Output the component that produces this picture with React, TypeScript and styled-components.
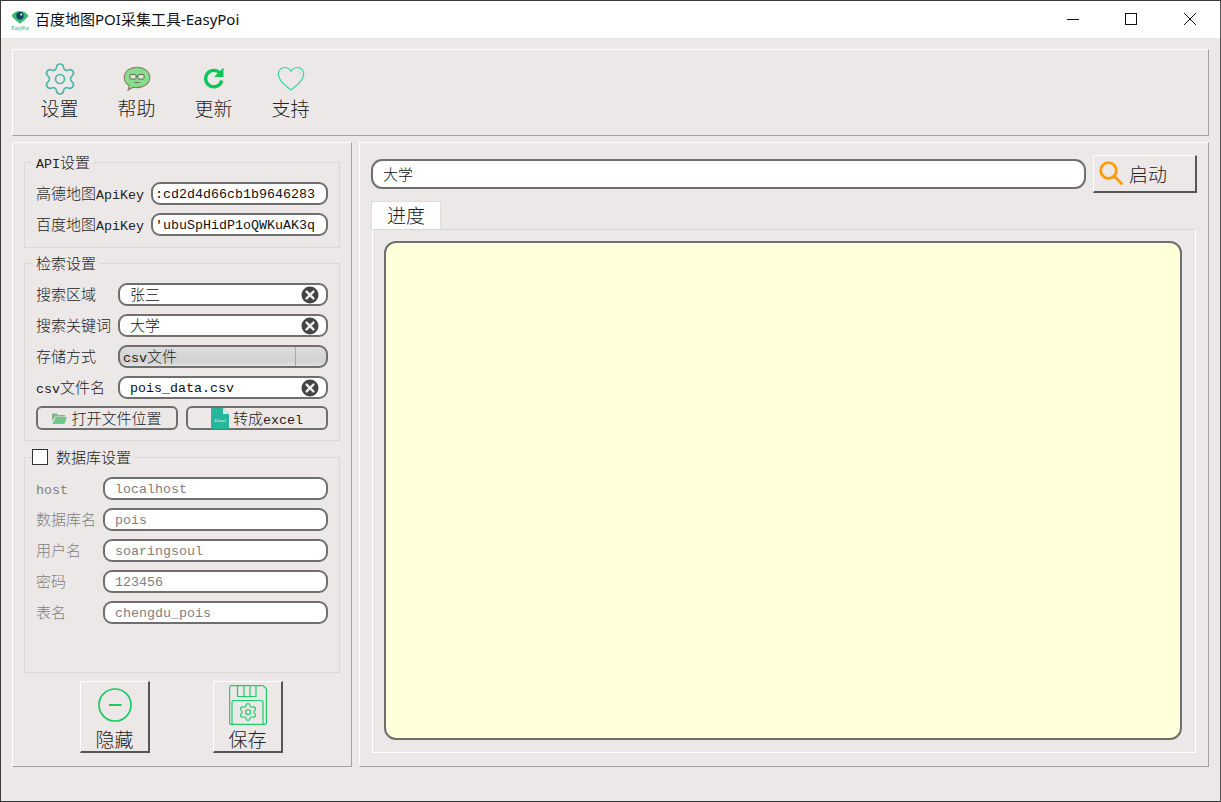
import React from 'react';
import styled, { createGlobalStyle } from 'styled-components';
import { Settings } from 'lucide-react';

const CJK = '"Noto Sans CJK SC", "Noto Sans", sans-serif';
const MONO = '"Liberation Mono", "Noto Sans CJK SC", monospace';
const PANEL = '#ece8e7';

const GlobalStyle = createGlobalStyle`
  html, body {
    margin: 0;
    padding: 0;
    background: ${PANEL};
  }
  * {
    box-sizing: border-box;
  }
`;

// latin runs are set smaller, the original font has half width latin glyphs
const LatinRun = styled.span`
  font-family: ${MONO};
  font-size: 0.889em;
`;

const Txt = ({ children }: { children: string }) => (
  <>
    {children.split(/([\x00-\x7f]+)/).map((part, i) =>
      i % 2 ? <LatinRun key={i}>{part}</LatinRun> : part,
    )}
  </>
);

const Window = styled.div`
  width: 1221px;
  height: 802px;
  display: flex;
  flex-direction: column;
  background: ${PANEL};
  border: 1px solid #3a3a3a;
  border-right-color: #555;
  font-family: ${CJK};
  font-weight: 300;
  overflow: hidden;
`;

const TitleBar = styled.div`
  height: 37px;
  flex: none;
  display: flex;
  align-items: center;
  background: #fff;
  padding-left: 9px;
`;

const TitleText = styled.span`
  margin-left: 5px;
  padding-bottom: 2px;
  font-family: "Noto Sans", "Noto Sans CJK SC", sans-serif;
  font-weight: 400;
  font-size: 15px;
  color: #111;
  flex: 1;
`;

const WinControls = styled.div`
  display: flex;
  height: 100%;
  margin-right: 1px;
`;

const WinButton = styled.div`
  width: 58.5px;
  display: flex;
  align-items: center;
  justify-content: center;
  padding-bottom: 1px;
`;

const Content = styled.div`
  flex: 1;
  display: flex;
  flex-direction: column;
  padding: 11px 11px 34px;
  min-height: 0;
`;

const Frame = styled.div`
  border: 1px solid #a3a09e;
  border-top-color: #fff;
  border-left-color: #fff;
`;

const Toolbar = styled(Frame)`
  height: 87px;
  flex: none;
  display: flex;
  padding: 11px 0 0 8px;
`;

const ToolButton = styled.div`
  width: 77px;
  height: 62px;
  display: flex;
  flex-direction: column;
  align-items: center;
  font-size: 19px;
  line-height: 22px;
  color: #222;
`;

const ToolIcon = styled.div`
  width: 36px;
  height: 36px;
  flex: none;
  display: flex;
  align-items: center;
  justify-content: center;
`;

const Main = styled.div`
  flex: 1;
  display: flex;
  gap: 7px;
  margin-top: 6px;
  min-height: 0;
`;

const LeftPanel = styled(Frame)`
  width: 340px;
  flex: none;
  display: flex;
  flex-direction: column;
  padding: 19px 11px 12px;
`;

const GroupBox = styled.div<{ $height?: number; $gap: number; $padBottom: number }>`
  position: relative;
  flex: none;
  height: ${({ $height }) => ($height ? `${$height}px` : 'auto')};
  display: flex;
  flex-direction: column;
  gap: 8px;
  padding: 19px 11px ${({ $padBottom }) => $padBottom}px;
  margin-bottom: ${({ $gap }) => $gap}px;
  border: 1px solid #dbd9d7;
`;

const GroupTitle = styled.div<{ $check?: boolean }>`
  position: absolute;
  top: -12px;
  left: 7px;
  display: flex;
  align-items: center;
  gap: 8px;
  padding: 0 4px 0 ${({ $check }) => ($check ? 0 : 4)}px;
  height: 20px;
  font-size: 15px;
  color: #222;
  background: ${PANEL};
`;

const CheckBox = styled.span`
  width: 16px;
  height: 16px;
  margin-top: 2px;
  background: #fff;
  border: 1px solid #333;
`;

const FieldRow = styled.div`
  display: flex;
  height: 23px;
  align-items: center;
`;

const Label = styled.div<{ $width: number; $off?: boolean }>`
  width: ${({ $width }) => $width}px;
  flex: none;
  padding-bottom: 2px;
  font-size: 15px;
  white-space: nowrap;
  color: ${({ $off }) => ($off ? '#808080' : '#222')};
`;

const Input = styled.div<{ $padLeft: number; $padRight: number }>`
  flex: 1;
  min-width: 0;
  height: 100%;
  display: flex;
  align-items: center;
  background: #fff;
  border: 2px solid #6f6f6f;
  border-radius: 9px;
  padding: 0 ${({ $padRight }) => $padRight}px 0 ${({ $padLeft }) => $padLeft}px;
`;

const InputText = styled.div<{ $off?: boolean }>`
  flex: 1;
  min-width: 0;
  white-space: nowrap;
  padding-bottom: 2px;
  font-size: 15px;
  line-height: 19px;
  color: ${({ $off }) => ($off ? '#808080' : '#111')};
`;

const Combo = styled.div`
  flex: 1;
  height: 100%;
  display: flex;
  align-items: center;
  border: 2px solid #6f6f6f;
  border-radius: 9px;
  background: linear-gradient(#dcdcdc, #d2d2d2 75%, #e2e2e2);
  font-size: 15px;
  color: #222;
  overflow: hidden;
`;

const ComboText = styled.div`
  flex: 1;
  padding: 0 0 2px 3px;
`;

const ComboArrow = styled.div`
  width: 31px;
  height: 100%;
  border-left: 1px solid #a8a8a8;
`;

const ActionRow = styled.div`
  display: flex;
  gap: 8px;
  height: 24px;
  margin-top: -1px;
`;

const ActionButton = styled.div`
  flex: 1;
  display: flex;
  align-items: center;
  justify-content: center;
  gap: 4px;
  border: 2px solid #6f6f6f;
  border-radius: 6px;
  font-size: 15px;
  color: #222;
  white-space: nowrap;
`;

const ActionLabel = styled.span`
  padding-bottom: 2px;
`;

const BottomButtons = styled.div`
  display: flex;
  gap: 63px;
  padding-left: 56px;
`;

const RaisedButton = styled.div`
  display: flex;
  align-items: center;
  border: 1px solid #fff;
  border-right: 2px solid #555;
  border-bottom: 2px solid #555;
  background: ${PANEL};
  font-size: 19px;
  color: #222;
`;

const BigButton = styled(RaisedButton)`
  width: 70px;
  height: 72px;
  flex-direction: column;
  line-height: 24px;
  padding-top: 1px;
`;

const BigIcon = styled.div`
  height: 44px;
  flex: none;
  display: flex;
  align-items: center;
  justify-content: center;
`;

const RightPanel = styled(Frame)`
  flex: 1;
  display: flex;
  flex-direction: column;
  padding: 12px 11px 13px 11px;
`;

const SearchRow = styled.div`
  display: flex;
  align-items: center;
  height: 38px;
  flex: none;
  gap: 7px;
`;

const SearchInput = styled.div`
  flex: 1;
  height: 30px;
  display: flex;
  align-items: center;
  padding: 0 0 2px 10px;
  background: #fff;
  border: 2px solid #6f6f6f;
  border-radius: 11px;
  font-size: 15px;
  color: #111;
`;

const StartButton = styled(RaisedButton)`
  width: 104px;
  height: 38px;
  gap: 6px;
  padding: 0 0 1px 5px;
  flex: none;
`;

const TabHead = styled.div`
  width: 70px;
  height: 29px;
  flex: none;
  margin-top: 8px;
  padding-bottom: 3px;
  display: flex;
  align-items: center;
  justify-content: center;
  background: #fff;
  border: 1px solid #dcdcdc;
  border-bottom: none;
  font-size: 19px;
  color: #222;
`;

const TabPane = styled.div`
  flex: 1;
  min-height: 0;
  margin: -1px 1px 0 1px;
  padding: 11px 12px 12px 11px;
  border: 1px solid #fff;
  border-top-color: #d6d6d6;
`;

const LogBox = styled.div`
  height: 100%;
  margin: 0 1px 1px 0;
  background: #ffffd9;
  border: 2px solid #6f6f6f;
  border-radius: 12px;
`;

const ClearIcon = () => (
  <svg width="18" height="18" viewBox="0 0 18 18" style={{ flex: 'none' }}>
    <circle cx="9" cy="9" r="8.5" fill="#444" />
    <path d="M5.6 5.6l6.8 6.8M12.4 5.6l-6.8 6.8" stroke="#eee" strokeWidth="2.4" strokeLinecap="round" />
  </svg>
);

const Logo = () => (
  <svg width="20" height="22" viewBox="0 0 20 22" style={{ marginTop: 1 }}>
    <path d="M10 2C6.200 2 3.600 4 1.500 6.800 3 9 5 10.500 7 12.200L10 14.800l3-2.600c2-1.700 4-3.200 5.500-5.400C16.400 4 13.800 2 10 2z" fill="#39bb73" />
    <circle cx="10" cy="6.800" r="3.700" fill="#123f66" />
    <circle cx="11.200" cy="5.600" r="1.100" fill="#dfe" />
    <text x="10" y="20.500" textAnchor="middle" fontSize="5.400" fontFamily="Liberation Serif, serif" fill="#2fa866">EasyPoi</text>
  </svg>
);

const GlassesBubble = () => (
  <svg width="28" height="26" viewBox="0 0 28 26">
    <path d="M14 1.200C6.800 1.200 1.200 5.600 1.200 11.400c0 3.400 1.900 6.200 4.900 8.100l-1 4.600 5.200-2.900c1.200.3 2.400.4 3.700.4 7.200 0 12.800-4.500 12.800-10.200S21.200 1.200 14 1.200z" fill="#86dd8b" stroke="#8f7a6c" strokeWidth="1.100" />
    <rect x="7" y="8.500" width="6" height="4.600" rx=".8" fill="#d5efd5" stroke="#6d665e" strokeWidth="1" />
    <rect x="15" y="8.500" width="6" height="4.600" rx=".8" fill="#d5efd5" stroke="#6d665e" strokeWidth="1" />
    <path d="M13 10h2M11.500 16.500h5" stroke="#6d665e" strokeWidth="1" />
  </svg>
);

const RefreshIcon = () => (
  <svg width="24" height="24" viewBox="0 0 24 24" fill="none" style={{ marginBottom: 2 }}>
    <path d="M18.200 7.400A8.200 8.200 0 1 0 19.800 14.500" stroke="#0bc75a" strokeWidth="3.400" />
    <path d="M21.500 1.500V11H12z" fill="#0bc75a" />
  </svg>
);

const HeartIcon = () => (
  <svg width="28" height="26" viewBox="0 0 28 26" fill="none">
    <path d="M14 24C10 20.500 1.200 15 1.200 8.200 1.200 4.200 4.200 1.500 7.700 1.500c2.700 0 4.900 1.400 6.300 3.700 1.400-2.300 3.600-3.700 6.300-3.700 3.500 0 6.500 2.700 6.500 6.700C26.800 15 18 20.500 14 24z" stroke="#3dd39b" strokeWidth="1.200" />
    <path d="M20.500 5c1.800.4 3 1.800 3.100 3.600M23.600 10.200v.8" stroke="#a8e8cf" strokeWidth="1.100" />
  </svg>
);

const MinusCircle = () => (
  <svg width="34" height="34" viewBox="0 0 34 34" fill="none">
    <circle cx="17" cy="17" r="16" stroke="#18cc62" strokeWidth="1.700" />
    <path d="M11 17h12.500" stroke="#18cc62" strokeWidth="2" />
  </svg>
);

const SaveIcon = () => (
  <svg width="38" height="40" viewBox="0 0 38 40" fill="none" stroke="#1fcf68" strokeWidth="1.200">
    <path d="M2.500.6H34l3.400 3.200V37.500c0 1-.8 1.900-1.900 1.900H2.500c-1 0-1.900-.9-1.900-1.900V2.500c0-1 .9-1.900 1.900-1.900z" />
    <path d="M8.500.6V11.500h18.500V.6M15 .6V11.500M21 .6V11.500" />
    <path d="M3 39V17c0-1 .6-1.500 1.500-1.500h28c1 0 1.500.6 1.500 1.500v22" />
    <Settings x={9} y={17} width={20} height={20} color="#1fcf68" strokeWidth={1.400} />
  </svg>
);

const FolderIcon = () => (
  <svg width="15" height="12" viewBox="0 0 15 12">
    <path d="M0 1.500h5l1.200 1.500H13v1.500H3.500L0 9z" fill="#7fb98a" />
    <path d="M3.800 5H15l-2.500 7H0.300z" fill="#74c78a" />
  </svg>
);

const ExcelDoc = () => (
  <svg width="18" height="21" viewBox="0 0 18 21">
    <path d="M0 0h12l6 6v15H0z" fill="#27b59b" />
    <path d="M12 0l6 6h-6z" fill="#d6f1ea" />
    <text x="9" y="13.500" textAnchor="middle" fontSize="5" fontStyle="italic" fontFamily="Liberation Serif, serif" fill="#e8fff8">Excel</text>
  </svg>
);

const SearchIcon = () => (
  <svg width="24" height="24" viewBox="0 0 24 24" fill="none" stroke="#ff9a0a" strokeWidth="2.800">
    <circle cx="9.500" cy="9.500" r="7.800" />
    <path d="M15 15l7.500 7.500" strokeLinecap="round" />
  </svg>
);

interface FieldProps {
  label: string;
  labelWidth: number;
  value: string;
  padLeft?: number;
  padRight?: number;
  clear?: boolean;
  off?: boolean;
}

const Field = ({ label, labelWidth, value, padLeft = 10, padRight = 7, clear, off }: FieldProps) => (
  <FieldRow>
    <Label $width={labelWidth} $off={off}>
      <Txt>{label}</Txt>
    </Label>
    <Input $padLeft={padLeft} $padRight={padRight}>
      <InputText $off={off}>
        <Txt>{value}</Txt>
      </InputText>
      {clear && <ClearIcon />}
    </Input>
  </FieldRow>
);

const App = () => {
  return (
    <Window>
      <GlobalStyle />
      <TitleBar>
        <Logo />
        <TitleText>百度地图POI采集工具-EasyPoi</TitleText>
        <WinControls>
          <WinButton>
            <svg width="12" height="12" viewBox="0 0 12 12">
              <path d="M0 6.500h12" stroke="#111" />
            </svg>
          </WinButton>
          <WinButton>
            <svg width="12" height="12" viewBox="0 0 12 12" fill="none">
              <rect x=".5" y=".5" width="11" height="11" stroke="#111" />
            </svg>
          </WinButton>
          <WinButton>
            <svg width="12" height="12" viewBox="0 0 12 12">
              <path d="M0 0l12 12M12 0L0 12" stroke="#111" />
            </svg>
          </WinButton>
        </WinControls>
      </TitleBar>

      <Content>
        <Toolbar>
          <ToolButton>
            <ToolIcon>
              <Settings size={36} color="#4db6ac" strokeWidth={1.1} />
            </ToolIcon>
            设置
          </ToolButton>
          <ToolButton>
            <ToolIcon>
              <GlassesBubble />
            </ToolIcon>
            帮助
          </ToolButton>
          <ToolButton>
            <ToolIcon>
              <RefreshIcon />
            </ToolIcon>
            更新
          </ToolButton>
          <ToolButton>
            <ToolIcon>
              <HeartIcon />
            </ToolIcon>
            支持
          </ToolButton>
        </Toolbar>

        <Main>
          <LeftPanel>
            <GroupBox $gap={15} $padBottom={11}>
              <GroupTitle>
                <span>
                  <Txt>API设置</Txt>
                </span>
              </GroupTitle>
              <Field label="高德地图ApiKey" labelWidth={115} value=":cd2d4d66cb1b9646283" padLeft={2} padRight={10} />
              <Field label="百度地图ApiKey" labelWidth={115} value="'ubuSpHidP1oQWKuAK3q" padLeft={2} padRight={10} />
            </GroupBox>

            <GroupBox $gap={16} $padBottom={10}>
              <GroupTitle>检索设置</GroupTitle>
              <Field label="搜索区域" labelWidth={82} value="张三" clear />
              <Field label="搜索关键词" labelWidth={82} value="大学" clear />
              <FieldRow>
                <Label $width={82}>存储方式</Label>
                <Combo>
                  <ComboText>
                    <Txt>csv文件</Txt>
                  </ComboText>
                  <ComboArrow />
                </Combo>
              </FieldRow>
              <Field label="csv文件名" labelWidth={82} value="pois_data.csv" clear />
              <ActionRow>
                <ActionButton>
                  <FolderIcon />
                  <ActionLabel>打开文件位置</ActionLabel>
                </ActionButton>
                <ActionButton>
                  <ExcelDoc />
                  <ActionLabel>
                    <Txt>转成excel</Txt>
                  </ActionLabel>
                </ActionButton>
              </ActionRow>
            </GroupBox>

            <GroupBox $height={216} $gap={8} $padBottom={10}>
              <GroupTitle $check>
                <CheckBox />
                数据库设置
              </GroupTitle>
              <Field off label="host" labelWidth={67} value="localhost" />
              <Field off label="数据库名" labelWidth={67} value="pois" />
              <Field off label="用户名" labelWidth={67} value="soaringsoul" />
              <Field off label="密码" labelWidth={67} value="123456" />
              <Field off label="表名" labelWidth={67} value="chengdu_pois" />
            </GroupBox>

            <BottomButtons>
              <BigButton>
                <BigIcon>
                  <MinusCircle />
                </BigIcon>
                隐藏
              </BigButton>
              <BigButton>
                <BigIcon>
                  <SaveIcon />
                </BigIcon>
                保存
              </BigButton>
            </BottomButtons>
          </LeftPanel>

          <RightPanel>
            <SearchRow>
              <SearchInput>大学</SearchInput>
              <StartButton>
                <SearchIcon />
                启动
              </StartButton>
            </SearchRow>
            <TabHead>进度</TabHead>
            <TabPane>
              <LogBox />
            </TabPane>
          </RightPanel>
        </Main>
      </Content>
    </Window>
  );
};

export default App;
